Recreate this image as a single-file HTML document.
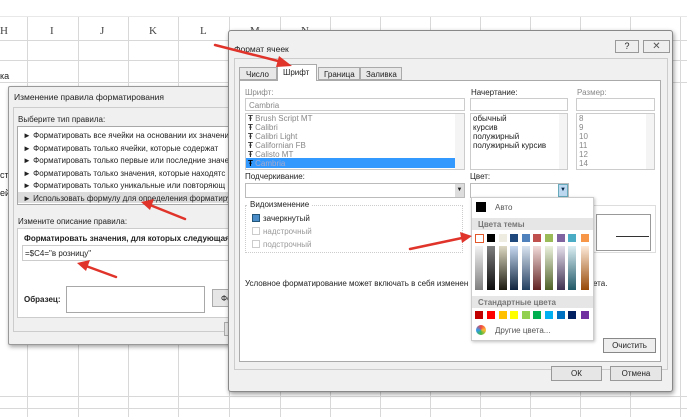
<!DOCTYPE html><html><head><meta charset="utf-8"><style>
*{margin:0;padding:0;box-sizing:border-box}
body{width:687px;height:415px;overflow:hidden;background:#fff;font-family:"Liberation Sans",sans-serif;font-size:8px;color:#222;position:relative}
.a{position:absolute;white-space:nowrap}
.vl{position:absolute;width:1px;background:#d8d8d8}
.hl{position:absolute;height:1px;background:#d8d8d8}
.box{position:absolute;border:1px solid #a8a8a8;background:#fff}
.sw{position:absolute;width:8px;height:8px}
</style></head><body>
<!-- grid -->
<div class="hl" style="left:0;top:16px;width:687px;background:#e8e8e8"></div>
<div class="hl" style="left:0;top:40px;width:687px"></div>
<div class="hl" style="left:0;top:60px;width:687px"></div>
<div class="hl" style="left:0;top:82px;width:687px"></div>
<div class="hl" style="left:0;top:396px;width:687px"></div>
<div class="hl" style="left:0;top:408px;width:687px"></div>
<div class="vl" style="left:27px;top:17px;height:400px"></div>
<div class="vl" style="left:78px;top:17px;height:400px"></div>
<div class="vl" style="left:128px;top:17px;height:400px"></div>
<div class="vl" style="left:178px;top:17px;height:400px"></div>
<div class="vl" style="left:229px;top:17px;height:400px"></div>
<div class="vl" style="left:280px;top:17px;height:400px"></div>
<div class="vl" style="left:330px;top:17px;height:400px"></div>
<div class="vl" style="left:380px;top:17px;height:400px"></div>
<div class="vl" style="left:430px;top:17px;height:400px"></div>
<div class="vl" style="left:480px;top:17px;height:400px"></div>
<div class="vl" style="left:530px;top:17px;height:400px"></div>
<div class="vl" style="left:580px;top:17px;height:400px"></div>
<div class="vl" style="left:630px;top:17px;height:400px"></div>
<div class="vl" style="left:680px;top:17px;height:400px"></div>
<div class="a" style="left:0;top:25px;font-family:'Liberation Serif',serif;font-size:11px;color:#444;word-spacing:0">H</div>
<div class="a" style="left:50px;top:25px;font-family:'Liberation Serif',serif;font-size:11px;color:#444">I</div>
<div class="a" style="left:100px;top:25px;font-family:'Liberation Serif',serif;font-size:11px;color:#444">J</div>
<div class="a" style="left:149px;top:25px;font-family:'Liberation Serif',serif;font-size:11px;color:#444">K</div>
<div class="a" style="left:200px;top:25px;font-family:'Liberation Serif',serif;font-size:11px;color:#444">L</div>
<div class="a" style="left:250px;top:25px;font-family:'Liberation Serif',serif;font-size:11px;color:#444">M</div>
<div class="a" style="left:301px;top:25px;font-family:'Liberation Serif',serif;font-size:11px;color:#444">N</div>
<div class="a" style="left:0;top:71px;font-size:9px">ка</div>
<div class="a" style="left:0;top:170px;font-size:9px">ст</div>
<div class="a" style="left:0;top:188px;font-size:9px">ей</div>

<!-- left dialog -->
<div class="a" style="left:8px;top:86px;width:240px;height:259px;background:#f0f0f0;border:1px solid #999;box-shadow:1px 2px 4px rgba(0,0,0,.35);border-radius:2px"></div>
<div class="a" style="left:14px;top:92px;font-size:8.5px">Изменение правила форматирования</div>
<div class="a" style="left:13px;top:107px;width:235px;height:225px;border:1px solid #ccc;background:#f0f0f0"></div>
<div class="a" style="left:18px;top:115px">Выберите тип правила:</div>
<div class="box" style="left:17px;top:126px;width:231px;height:79px"></div>
<div class="a" style="left:18px;top:192px;width:230px;height:11px;background:#dcdcdc"></div>
<div class="a" style="left:23px;top:130px;line-height:12.5px">► Форматировать все ячейки на основании их значени<br>► Форматировать только ячейки, которые содержат<br>► Форматировать только первые или последние значе<br>► Форматировать только значения, которые находятс<br>► Форматировать только уникальные или повторяющ<br>► Использовать формулу для определения форматиру</div>
<div class="a" style="left:18px;top:217px">Измените описание правила:</div>
<div class="box" style="left:17px;top:228px;width:231px;height:90px;border-color:#ccc"></div>
<div class="a" style="left:24px;top:234px;font-weight:bold">Форматировать значения, для которых следующая ф</div>
<div class="box" style="left:22px;top:245px;width:226px;height:16px;border-color:#ccc"></div>
<div class="a" style="left:25px;top:249px">=$C4="в розницу"</div>
<div class="a" style="left:24px;top:295px;font-weight:bold">Образец:</div>
<div class="box" style="left:66px;top:286px;width:139px;height:27px"></div>
<div class="a" style="left:212px;top:289px;width:30px;height:18px;border:1px solid #aaa;background:#e6e6e6;padding:4px 0 0 8px">Фо</div>
<div class="a" style="left:224px;top:322px;width:10px;height:14px;border:1px solid #aaa;background:#e6e6e6"></div>

<!-- right dialog -->
<div class="a" style="left:228px;top:30px;width:445px;height:362px;background:#f0f0f0;border:1px solid #888;box-shadow:1px 2px 5px rgba(0,0,0,.4);border-radius:3px"></div>
<div class="a" style="left:234px;top:44px;font-size:8.5px">Формат ячеек</div>
<div class="a" style="left:615px;top:40px;width:24px;height:13px;border:1px solid #999;background:#eee;text-align:center;font-size:9px;line-height:11px">?</div>
<div class="a" style="left:643px;top:40px;width:27px;height:13px;border:1px solid #999;background:#eee;text-align:center;font-size:10px;line-height:11px;color:#555">✕</div>
<div class="a" style="left:234px;top:58px;width:434px;height:312px;border:1px solid #ccc"></div>
<div class="a" style="left:239px;top:80px;width:422px;height:282px;background:#fff;border:1px solid #aaa"></div>
<div class="a" style="left:239px;top:67px;width:38px;height:13px;border:1px solid #aaa;background:#e8e8e8;padding:2px 0 0 6px">Число</div>
<div class="a" style="left:277px;top:64px;width:40px;height:17px;border:1px solid #aaa;border-bottom:none;background:#fff;padding:3px 0 0 5px">Шрифт</div>
<div class="a" style="left:318px;top:67px;width:42px;height:13px;border:1px solid #aaa;background:#e8e8e8;padding:2px 0 0 5px">Граница</div>
<div class="a" style="left:360px;top:67px;width:42px;height:13px;border:1px solid #aaa;background:#e8e8e8;padding:2px 0 0 5px">Заливка</div>

<div class="a" style="left:245px;top:88px;color:#888">Шрифт:</div>
<div class="box" style="left:245px;top:98px;width:220px;height:13px;border-color:#ccc;color:#888;padding:2px 3px">Cambria</div>
<div class="box" style="left:245px;top:113px;width:220px;height:57px;border-color:#ccc"></div>
<div class="a" style="left:246px;top:158px;width:209px;height:10px;background:#3399ff"></div>
<div class="a" style="left:248px;top:114px;line-height:9px;color:#888"><b style="color:#333">Ŧ</b> Brush Script MT<br><b style="color:#333">Ŧ</b> Calibri<br><b style="color:#333">Ŧ</b> Calibri Light<br><b style="color:#333">Ŧ</b> Californian FB<br><b style="color:#333">Ŧ</b> Calisto MT<br><b style="color:#000">Ŧ</b> <span style="color:#aac">Cambria</span></div>
<div class="a" style="left:455px;top:114px;width:9px;height:55px;background:#f4f4f4"></div>

<div class="a" style="left:471px;top:88px">Начертание:</div>
<div class="box" style="left:470px;top:98px;width:98px;height:13px;border-color:#ccc"></div>
<div class="box" style="left:470px;top:113px;width:98px;height:57px;border-color:#ccc"></div>
<div class="a" style="left:473px;top:114px;line-height:9px">обычный<br>курсив<br>полужирный<br>полужирный курсив</div>
<div class="a" style="left:559px;top:114px;width:8px;height:55px;background:#f4f4f4"></div>
<div class="a" style="left:577px;top:88px;color:#888">Размер:</div>
<div class="box" style="left:576px;top:98px;width:79px;height:13px;border-color:#ccc"></div>
<div class="box" style="left:576px;top:113px;width:79px;height:57px;border-color:#ccc"></div>
<div class="a" style="left:579px;top:114px;line-height:9px;color:#888">8<br>9<br>10<br>11<br>12<br>14</div>
<div class="a" style="left:646px;top:114px;width:8px;height:55px;background:#f4f4f4"></div>

<div class="a" style="left:245px;top:172px">Подчеркивание:</div>
<div class="box" style="left:245px;top:183px;width:220px;height:15px;border-color:#bbb"></div>
<div class="a" style="left:455px;top:184px;width:9px;height:13px;background:#ddd;font-size:6px;text-align:center;line-height:13px">▼</div>
<div class="a" style="left:470px;top:172px">Цвет:</div>
<div class="box" style="left:470px;top:183px;width:99px;height:15px;border-color:#bbb"></div>
<div class="a" style="left:558px;top:184px;width:10px;height:13px;background:#bcd8f0;border:1px solid #6ab;font-size:6px;text-align:center;line-height:11px;color:#024">▼</div>

<div class="a" style="left:245px;top:205px;width:218px;height:48px;border:1px dotted #ccc"></div>
<div class="a" style="left:248px;top:200px;background:#fff;padding:0 2px">Видоизменение</div>
<div class="a" style="left:252px;top:214px;width:8px;height:8px;background:#4a8cc8;border:1px solid #257"></div>
<div class="a" style="left:263px;top:214px">зачеркнутый</div>
<div class="a" style="left:252px;top:227px;width:8px;height:8px;border:1px solid #ccc"></div>
<div class="a" style="left:263px;top:227px;color:#999">надстрочный</div>
<div class="a" style="left:252px;top:240px;width:8px;height:8px;border:1px solid #ccc"></div>
<div class="a" style="left:263px;top:240px;color:#999">подстрочный</div>

<div class="a" style="left:592px;top:205px;width:64px;height:48px;border:1px solid #ddd"></div>
<div class="a" style="left:596px;top:214px;width:55px;height:37px;border:1px solid #999"></div>
<div class="a" style="left:616px;top:236px;width:33px;height:1px;background:#333"></div>
<div class="a" style="left:245px;top:279px">Условное форматирование может включать в себя изменен</div>
<div class="a" style="left:593px;top:279px">ета.</div>
<div class="a" style="left:603px;top:338px;width:53px;height:15px;border:1px solid #888;background:#eee;text-align:center;line-height:13px">Очистить</div>
<div class="a" style="left:551px;top:366px;width:51px;height:15px;border:1px solid #999;background:#e6e6e6;text-align:center;line-height:13px">ОК</div>
<div class="a" style="left:610px;top:366px;width:52px;height:15px;border:1px solid #999;background:#e6e6e6;text-align:center;line-height:13px">Отмена</div>

<!-- color popup -->
<div class="a" style="left:471px;top:197px;width:123px;height:144px;background:#fff;border:1px solid #ccc;box-shadow:1px 1px 3px rgba(0,0,0,.25)"></div>
<div class="a" style="left:476px;top:202px;width:10px;height:10px;background:#000"></div>
<div class="a" style="left:495px;top:203px;color:#555">Авто</div>
<div class="a" style="left:472px;top:218px;width:121px;height:12px;background:#e6e6e6"></div>
<div class="a" style="left:478px;top:220px;color:#777;font-weight:bold">Цвета темы</div>
<div class="a" style="left:472px;top:296px;width:121px;height:12px;background:#e6e6e6"></div>
<div class="a" style="left:478px;top:298px;color:#777;font-weight:bold">Стандартные цвета</div>
<div class="a" style="left:476px;top:325px;width:10px;height:10px;border-radius:50%;background:conic-gradient(#e44,#fb3,#4b4,#39e,#e44)"></div>
<div class="a" style="left:495px;top:326px;color:#555">Другие цвета...</div>
<svg class="a" style="left:0;top:0" width="687" height="415">
<g id="t"></g>
<!-- theme row -->
<rect x="475.5" y="234.5" width="8" height="8" fill="#fff" stroke="#e2582a"/>
<rect x="487" y="234" width="8" height="8" fill="#000"/>
<rect x="499" y="234" width="8" height="8" fill="#eeece1"/>
<rect x="510" y="234" width="8" height="8" fill="#1f497d"/>
<rect x="522" y="234" width="8" height="8" fill="#4f81bd"/>
<rect x="533" y="234" width="8" height="8" fill="#c0504d"/>
<rect x="545" y="234" width="8" height="8" fill="#9bbb59"/>
<rect x="557" y="234" width="8" height="8" fill="#8064a2"/>
<rect x="568" y="234" width="8" height="8" fill="#4bacc6"/>
<rect x="581" y="234" width="8" height="8" fill="#f79646"/>
<!-- shades -->
<g>
<rect x="475" y="246" width="8" height="44" fill="url(#g0)"/>
<rect x="487" y="246" width="8" height="44" fill="url(#g1)"/>
<rect x="499" y="246" width="8" height="44" fill="url(#g2)"/>
<rect x="510" y="246" width="8" height="44" fill="url(#g3)"/>
<rect x="522" y="246" width="8" height="44" fill="url(#g4)"/>
<rect x="533" y="246" width="8" height="44" fill="url(#g5)"/>
<rect x="545" y="246" width="8" height="44" fill="url(#g6)"/>
<rect x="557" y="246" width="8" height="44" fill="url(#g7)"/>
<rect x="568" y="246" width="8" height="44" fill="url(#g8)"/>
<rect x="581" y="246" width="8" height="44" fill="url(#g9)"/>
</g>
<defs>
<linearGradient id="g0" x1="0" y1="0" x2="0" y2="1"><stop offset="0" stop-color="#f2f2f2"/><stop offset="1" stop-color="#7f7f7f"/></linearGradient>
<linearGradient id="g1" x1="0" y1="0" x2="0" y2="1"><stop offset="0" stop-color="#7f7f7f"/><stop offset="1" stop-color="#0d0d0d"/></linearGradient>
<linearGradient id="g2" x1="0" y1="0" x2="0" y2="1"><stop offset="0" stop-color="#ddd9c3"/><stop offset="1" stop-color="#1d1b10"/></linearGradient>
<linearGradient id="g3" x1="0" y1="0" x2="0" y2="1"><stop offset="0" stop-color="#c6d9f0"/><stop offset="1" stop-color="#0f243e"/></linearGradient>
<linearGradient id="g4" x1="0" y1="0" x2="0" y2="1"><stop offset="0" stop-color="#dbe5f1"/><stop offset="1" stop-color="#244061"/></linearGradient>
<linearGradient id="g5" x1="0" y1="0" x2="0" y2="1"><stop offset="0" stop-color="#f2dcdb"/><stop offset="1" stop-color="#632423"/></linearGradient>
<linearGradient id="g6" x1="0" y1="0" x2="0" y2="1"><stop offset="0" stop-color="#ebf1dd"/><stop offset="1" stop-color="#4f6128"/></linearGradient>
<linearGradient id="g7" x1="0" y1="0" x2="0" y2="1"><stop offset="0" stop-color="#e5e0ec"/><stop offset="1" stop-color="#3f3151"/></linearGradient>
<linearGradient id="g8" x1="0" y1="0" x2="0" y2="1"><stop offset="0" stop-color="#dbeef3"/><stop offset="1" stop-color="#205867"/></linearGradient>
<linearGradient id="g9" x1="0" y1="0" x2="0" y2="1"><stop offset="0" stop-color="#fdeada"/><stop offset="1" stop-color="#974806"/></linearGradient>
</defs>
<!-- standard -->
<rect x="475" y="311" width="8" height="8" fill="#c00000"/>
<rect x="487" y="311" width="8" height="8" fill="#ff0000"/>
<rect x="499" y="311" width="8" height="8" fill="#ffc000"/>
<rect x="510" y="311" width="8" height="8" fill="#ffff00"/>
<rect x="522" y="311" width="8" height="8" fill="#92d050"/>
<rect x="533" y="311" width="8" height="8" fill="#00b050"/>
<rect x="545" y="311" width="8" height="8" fill="#00b0f0"/>
<rect x="557" y="311" width="8" height="8" fill="#0070c0"/>
<rect x="568" y="311" width="8" height="8" fill="#002060"/>
<rect x="581" y="311" width="8" height="8" fill="#7030a0"/>
<!-- arrows -->
<g stroke="#e0332a" stroke-width="2.5" fill="#e0332a" stroke-linecap="round">
<line x1="215" y1="45" x2="282" y2="62"/><polygon points="292,66 279,56 276,67" stroke="none"/>
<line x1="185" y1="219" x2="150" y2="205"/><polygon points="141,202 154,199 150,210" stroke="none"/>
<line x1="116" y1="277" x2="86" y2="266"/><polygon points="77,263 90,260 86,271" stroke="none"/>
<line x1="410" y1="249" x2="462" y2="238"/><polygon points="472,236 460,232 462,243" stroke="none"/>
</g>
</svg>
</body></html>
